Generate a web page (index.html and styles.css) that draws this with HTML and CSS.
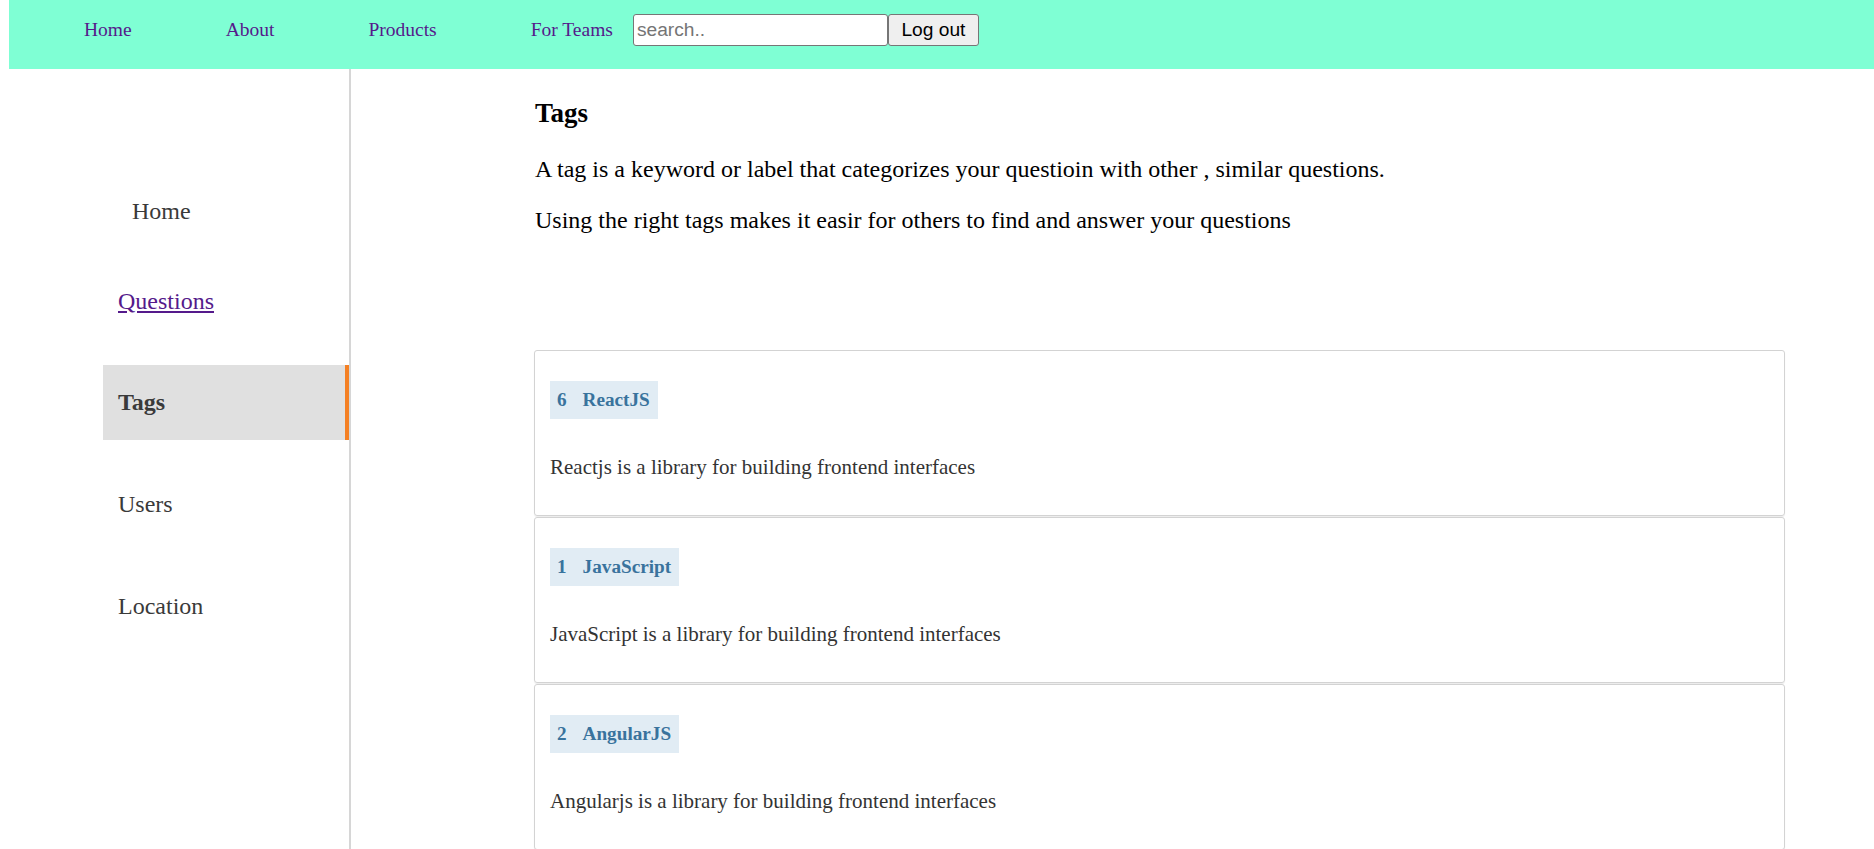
FILE: index.html
```html
<!DOCTYPE html>
<html lang="en">
<head>
<meta charset="utf-8">
<title>Tags</title>
<link rel="stylesheet" href="styles.css">
</head>
<body>
<header class="topbar">
  <ul class="topnav">
    <li><a href="#">Home</a></li>
    <li><a href="#">About</a></li>
    <li><a href="#">Products</a></li>
    <li><a href="#">For Teams</a></li>
  </ul>
  <div class="search">
    <input class="search-input" type="text" placeholder="search..">
    <button class="logout">Log out</button>
  </div>
</header>
<div class="page">
  <aside class="sidebar">
    <div class="side-item side-home">Home</div>
    <a class="side-item side-link" href="#">Questions</a>
    <div class="side-item side-active">Tags</div>
    <div class="side-item">Users</div>
    <div class="side-item">Location</div>
  </aside>
  <main class="content">
    <h2 class="title">Tags</h2>
    <p class="intro">A tag is a keyword or label that categorizes your questioin with other , similar questions.</p>
    <p class="intro intro-second">Using the right tags makes it easir for others to find and answer your questions</p>
    <div class="cards">
      <div class="card">
        <div class="tag"><span class="tag-count">6</span>ReactJS</div>
        <p class="card-desc">Reactjs is a library for building frontend interfaces</p>
      </div>
      <div class="card">
        <div class="tag"><span class="tag-count">1</span>JavaScript</div>
        <p class="card-desc">JavaScript is a library for building frontend interfaces</p>
      </div>
      <div class="card">
        <div class="tag"><span class="tag-count">2</span>AngularJS</div>
        <p class="card-desc">Angularjs is a library for building frontend interfaces</p>
      </div>
    </div>
  </main>
</div>
</body>
</html>
```
FILE: styles.css
```css
html, body {
  margin: 0;
  padding: 0;
  background: #ffffff;
  font-family: "Liberation Serif", "Times New Roman", serif;
}

.topbar {
  margin-left: 9px;
  height: 69px;
  box-sizing: border-box;
  padding-top: 14px;
  background: #7fffd4;
  display: flex;
  align-items: flex-start;
}

.topnav {
  list-style: none;
  margin: 0;
  padding: 0 0 0 75px;
  height: 32px;
  display: flex;
  align-items: center;
  gap: 94px;
}

.topnav a {
  color: #551a8b;
  text-decoration: none;
  font-size: 19.5px;
}

.search {
  margin-left: 20px;
  display: flex;
}

.search-input {
  width: 255px;
  height: 32px;
  box-sizing: border-box;
  margin: 0;
  padding: 1px 3px;
  border: 1px solid #767676;
  border-radius: 3px;
  font-family: "Liberation Sans", Arial, sans-serif;
  font-size: 19.2px;
  background: #fff;
}

.search-input::placeholder {
  color: #757575;
}

.logout {
  width: 91px;
  height: 32px;
  box-sizing: border-box;
  margin: 0;
  padding: 1px 6px;
  border: 1px solid #767676;
  border-radius: 3px;
  background: #efefef;
  color: #000;
  font-family: "Liberation Sans", Arial, sans-serif;
  font-size: 19.2px;
}

.page {
  display: flex;
  align-items: stretch;
  min-height: 780px;
}

.sidebar {
  width: 246px;
  padding: 105px 0 0 103px;
  border-right: 2px solid #d6d6d6;
  display: flex;
  flex-direction: column;
}

.side-item {
  height: 75px;
  box-sizing: border-box;
  padding-left: 15px;
  margin-bottom: 27px;
  display: flex;
  align-items: center;
  font-size: 24px;
  color: #3a3a3a;
}

.side-home {
  padding-left: 29px;
  margin-bottom: 15px;
}

.side-link {
  color: #551a8b;
  text-decoration: underline;
}

.side-active {
  margin-top: -1px;
  background: #e0e0e0;
  border-right: 4px solid #f48024;
  font-weight: bold;
}

.content {
  flex: 1;
  padding: 0 89px 0 183px;
}

.title {
  margin: 29px 0 0 1px;
  font-size: 27px;
  line-height: 31px;
  font-weight: bold;
  color: #000;
}

.intro {
  margin: 26px 0 0 1px;
  font-size: 24px;
  line-height: 28px;
  color: #000;
}

.intro-second {
  margin-top: 23px;
}

.cards {
  margin-top: 116px;
  display: flex;
  flex-direction: column;
  gap: 1px;
}

.card {
  border: 1px solid #d3d3d3;
  border-radius: 3px;
  box-shadow: 0 1px 1px rgba(0, 0, 0, 0.08);
  padding: 30px 15px 36px 15px;
  display: flex;
  flex-direction: column;
  align-items: flex-start;
}

.tag {
  display: block;
  background: #e1ecf4;
  color: #39739d;
  font-weight: bold;
  font-size: 19.2px;
  line-height: 22px;
  padding: 8px 8px 8px 7px;
}

.tag-count {
  margin-right: 16px;
}

.card-desc {
  margin: 36px 0 0 0;
  font-size: 21px;
  line-height: 24px;
  color: #333;
}
```
